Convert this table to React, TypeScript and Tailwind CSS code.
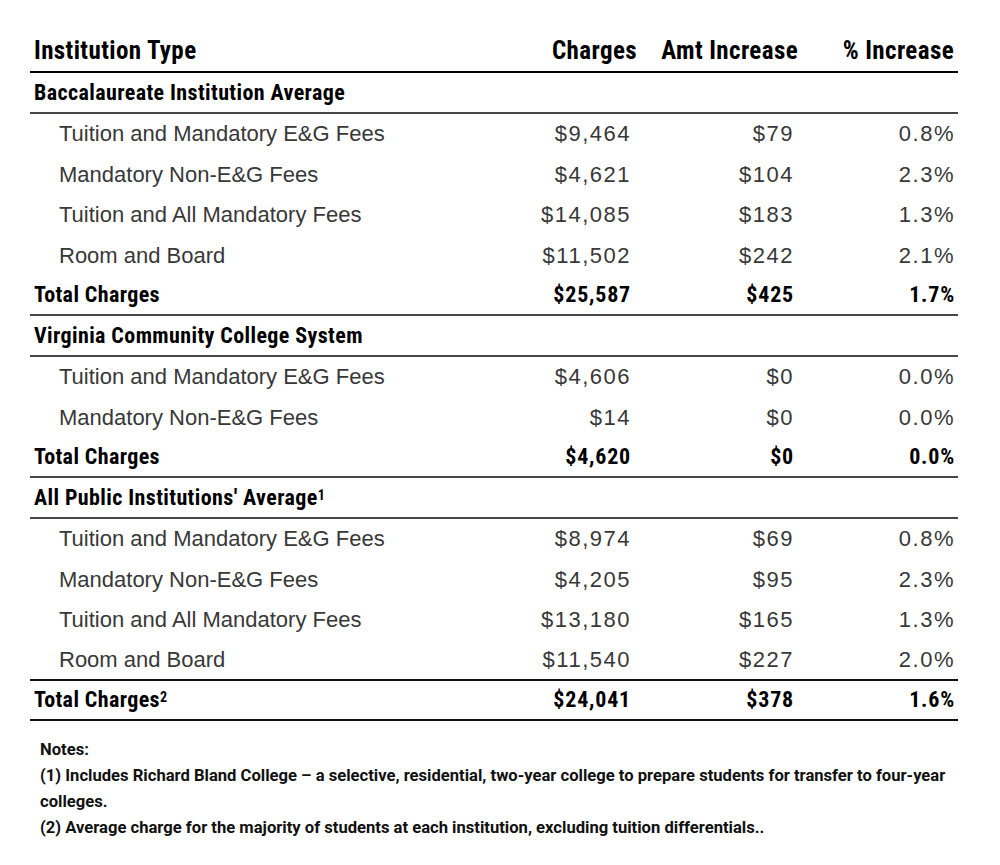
import React from "react";

type Row = {
  label: React.ReactNode;
  charges?: string;
  amt?: string;
  pct?: string;
  kind: "group" | "item" | "total";
  border?: "gray" | "black";
};

const rows: Row[] = [
  { kind: "group", label: "Baccalaureate Institution Average", border: "gray" },
  { kind: "item", label: "Tuition and Mandatory E&G Fees", charges: "$9,464", amt: "$79", pct: "0.8%" },
  { kind: "item", label: "Mandatory Non-E&G Fees", charges: "$4,621", amt: "$104", pct: "2.3%" },
  { kind: "item", label: "Tuition and All Mandatory Fees", charges: "$14,085", amt: "$183", pct: "1.3%" },
  { kind: "item", label: "Room and Board", charges: "$11,502", amt: "$242", pct: "2.1%" },
  { kind: "total", label: "Total Charges", charges: "$25,587", amt: "$425", pct: "1.7%", border: "gray" },
  { kind: "group", label: "Virginia Community College System", border: "gray" },
  { kind: "item", label: "Tuition and Mandatory E&G Fees", charges: "$4,606", amt: "$0", pct: "0.0%" },
  { kind: "item", label: "Mandatory Non-E&G Fees", charges: "$14", amt: "$0", pct: "0.0%" },
  { kind: "total", label: "Total Charges", charges: "$4,620", amt: "$0", pct: "0.0%", border: "gray" },
  {
    kind: "group",
    label: (
      <>
        All Public Institutions' Average
        <sup className="relative -top-[5px] text-[14px] tracking-normal">1</sup>
      </>
    ),
    border: "gray",
  },
  { kind: "item", label: "Tuition and Mandatory E&G Fees", charges: "$8,974", amt: "$69", pct: "0.8%" },
  { kind: "item", label: "Mandatory Non-E&G Fees", charges: "$4,205", amt: "$95", pct: "2.3%" },
  { kind: "item", label: "Tuition and All Mandatory Fees", charges: "$13,180", amt: "$165", pct: "1.3%" },
  { kind: "item", label: "Room and Board", charges: "$11,540", amt: "$227", pct: "2.0%", border: "black" },
  {
    kind: "total",
    label: (
      <>
        Total Charges
        <sup className="relative -top-[5px] text-[14px] tracking-normal">2</sup>
      </>
    ),
    charges: "$24,041",
    amt: "$378",
    pct: "1.6%",
    border: "black",
  },
];

// condensed bold headings (Franklin Gothic Demi Cond look-alike)
const cond = "font-['Roboto',sans-serif] font-bold font-stretch-condensed text-black";
const book = "font-['Liberation_Sans',Arial,sans-serif] text-[#383838]";

function TableRow({ r }: { r: Row }) {
  const line =
    r.border === "black" ? "border-b-2 border-[#111]" : r.border === "gray" ? "border-b-2 border-[#474747]" : "";
  const font = r.kind === "item" ? `${book} text-[22px]` : `${cond} text-[22px] tracking-[0.4px]`;
  const num = r.kind === "item" ? "tracking-[1.5px]" : "tracking-[0.8px]";
  return (
    <div className={`grid h-[40.5px] grid-cols-[1fr_122px_163px_163px] items-center ${line} ${font}`}>
      <div className={r.kind === "item" ? "pl-[29px]" : "pl-[4px]"}>{r.label}</div>
      <div className={`pr-[1px] text-right ${num}`}>{r.charges}</div>
      <div className={`pr-[1px] text-right ${num}`}>{r.amt}</div>
      <div className={`pr-[3px] text-right ${num}`}>{r.pct}</div>
    </div>
  );
}

export default function App() {
  return (
    <div className="min-h-[865px] w-[1000px] bg-white pt-[31px]">
      <div className="ml-[30px] w-[928px]">
        <div
          className={`grid h-[42px] grid-cols-[1fr_130px_159px_158px] items-center border-b-2 border-black text-[25px] tracking-[0.4px] ${cond}`}
        >
          <div className="pl-[4px]">Institution Type</div>
          <div className="pr-[4px] text-right">Charges</div>
          <div className="pr-[2px] text-right">Amt Increase</div>
          <div className="pr-[4px] text-right">% Increase</div>
        </div>
        {rows.map((r, i) => (
          <TableRow key={i} r={r} />
        ))}
      </div>
      <div className="ml-[40px] mt-[16px] font-['Roboto',sans-serif] text-[16.6px] leading-[26px] font-bold text-[#111]">
        <p>Notes:</p>
        <p>
          (1) Includes Richard Bland College – a selective, residential, two-year college to prepare students for
          transfer to four-year
          <br />
          colleges.
        </p>
        <p>(2) Average charge for the majority of students at each institution, excluding tuition differentials..</p>
      </div>
    </div>
  );
}
